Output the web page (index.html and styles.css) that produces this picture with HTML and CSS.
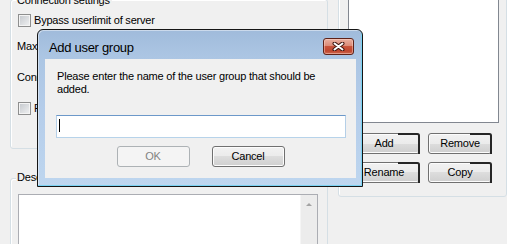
FILE: index.html
```html
<!DOCTYPE html>
<html lang="en">
<head>
    <meta charset="UTF-8">
    <title>Add user group</title>
    <link rel="stylesheet" href="styles.css">
</head>
<body>
    <div class="form">
        <div class="left">
            <div class="group conn">
                <div class="group-title">Connection settings</div>
                <div class="check-row first"><span class="checkbox"></span>Bypass userlimit of server</div>
                <div class="field-row">Maximum connection count:</div>
                <div class="field-row lower">Connection limit per IP:</div>
                <div class="check-row"><span class="checkbox"></span>Force SSL for user login</div>
            </div>
            <div class="group desc">
                <div class="group-title">Description</div>
                <div class="memo">
                    <div class="scrollbar"><span class="arrow-up"></span></div>
                </div>
            </div>
        </div>
        <div class="right">
            <div class="group groups">
                <div class="listbox"></div>
                <div class="btn-row">
                    <button class="btn side wide">Add</button>
                    <button class="btn side">Remove</button>
                </div>
                <div class="btn-row">
                    <button class="btn side wide">Rename</button>
                    <button class="btn side">Copy</button>
                </div>
            </div>
        </div>
    </div>

    <div class="dialog">
        <div class="titlebar">
            <span class="title">Add user group</span>
            <button class="close">
                <svg width="13" height="9" viewBox="0 0 13 9">
                    <path d="M2.5 1.5 10.5 7.5M10.5 1.5 2.5 7.5" stroke="#3f1610" stroke-width="4" stroke-linecap="round" fill="none"/>
                    <path d="M2.5 1.5 10.5 7.5M10.5 1.5 2.5 7.5" stroke="#fff" stroke-width="2" stroke-linecap="round" fill="none"/>
                </svg>
            </button>
        </div>
        <div class="client">
            <p class="prompt">Please enter the name of the user group that should be added.</p>
            <div class="textbox"><span class="caret"></span></div>
            <div class="actions">
                <button class="btn" disabled>OK</button>
                <button class="btn">Cancel</button>
            </div>
        </div>
    </div>
</body>
</html>
```

FILE: styles.css
```css
*{
    box-sizing: border-box;
}
body{
    margin: 0;
    width: 507px;
    height: 244px;
    overflow: hidden;
    position: relative;
    background: #f0f0f0;
    font-family: "Liberation Sans", Arial, sans-serif;
    font-size: 11px;
    line-height: 13px;
    letter-spacing: -0.2px;
    color: #000;
}
.form{
    display: flex;
    align-items: flex-start;
}
.left{
    width: 320px;
    margin: -1px 0 0 10px;
}
.right{
    width: 170px;
    margin: -18px 0 0 10px;
}
.group{
    border: 1px solid #d5dfe5;
    border-radius: 3px;
    box-shadow: inset 1px 1px 0 #fff;
}
.group-title{
    width: fit-content;
    margin: -6px 0 0 5px;
    padding: 0 2px 0 1px;
    background: #f0f0f0;
    white-space: nowrap;
}
.conn{
    padding-bottom: 33px;
}
.check-row{
    display: flex;
    align-items: center;
    gap: 3px;
    height: 13px;
    margin: 18px 0 0 7px;
    white-space: nowrap;
}
.check-row.first{
    margin-top: 7px;
}
.checkbox{
    width: 13px;
    height: 13px;
    flex: none;
    border: 1px solid #8e8f8f;
    background: linear-gradient(135deg, #c3c7cc, #f1f2f3);
    box-shadow: inset 0 0 0 1px #f4f4f4;
}
.field-row{
    height: 13px;
    margin: 13px 0 0 6px;
    white-space: nowrap;
}
.field-row.lower{
    margin-top: 18px;
}
.desc{
    margin-top: 29px;
    height: 100px;
}
.desc .group-title{
    margin-top: -8px;
}
.memo{
    margin: 10px 0 0 7px;
    width: 300px;
    height: 80px;
    border: 1px solid #abadb3;
    background: #fff;
    display: flex;
    justify-content: flex-end;
}
.scrollbar{
    width: 17px;
    background: #ececec;
    border-left: 1px solid #f5f5f5;
}
.arrow-up{
    display: block;
    width: 0;
    margin: 8px auto 0;
    border-left: 3px solid transparent;
    border-right: 3px solid transparent;
    border-bottom: 3px solid #a3a3a3;
}
.groups{
    padding: 0 0 13px 9px;
}
.listbox{
    width: 151px;
    height: 140px;
    border: 1px solid #828790;
    background: #fff;
}
.btn-row{
    display: flex;
    gap: 8px;
    margin-top: 10px;
}
.btn-row + .btn-row{
    margin-top: 8px;
}
.btn{
    font: inherit;
    letter-spacing: inherit;
    color: #000;
    padding: 0;
    width: 73px;
    height: 21px;
    border: 1px solid #707070;
    border-radius: 3px;
    background: linear-gradient(#f2f2f2, #ebebeb 50%, #dddddd 50%, #cfcfcf);
    box-shadow: inset 0 0 0 1px #fcfcfc;
}
.btn:disabled{
    border-color: #adb2b5;
    background: #f4f4f4;
    color: #838383;
    box-shadow: none;
}
.btn.side{
    position: relative;
    width: 64px;
}
.btn.side.wide{
    width: 72px;
}
/* stray dark edge on the top right of these buttons */
.btn.side::after{
    content: '';
    position: absolute;
    top: -1px;
    right: -1px;
    width: 20px;
    height: 19px;
    border-top: 2px solid #262626;
    border-right: 2px solid #262626;
    border-top-right-radius: 3px;
}

.dialog{
    position: absolute;
    left: 37px;
    top: 29px;
    width: 326px;
    height: 158px;
    display: flex;
    flex-direction: column;
    padding: 0 6px 8px 7px;
    border: 1px solid #151515;
    border-radius: 6px 6px 0 0;
    background: linear-gradient(#a0bbdb, #abc5e3 25px, #b5cdea 80px, #bed6ef);
    box-shadow: inset -1px -1px 0 #7bd3f3, inset 1px 1px 0 rgba(255,255,255,0.45);
}
.titlebar{
    height: 29px;
    flex: none;
    display: flex;
    align-items: flex-start;
    padding-left: 4px;
}
.title{
    padding-top: 10px;
    font-size: 13px;
    line-height: 15px;
    letter-spacing: -0.3px;
}
.close{
    margin: 8px 2px 0 auto;
    width: 31px;
    height: 17px;
    padding: 0;
    display: flex;
    align-items: center;
    justify-content: center;
    border: 1px solid #5e2218;
    border-radius: 3px;
    background: linear-gradient(#eab0a0, #dc8b77 45%, #c9533b 50%, #bf472f 80%, #d06a51);
    box-shadow: inset 0 0 0 1px rgba(255,220,210,0.45);
}
.client{
    flex: 1;
    background: #f0f0f0;
}
.prompt{
    margin: 11px 0 0 12px;
    max-width: 280px;
}
.textbox{
    margin: 19px 0 0 11px;
    width: 290px;
    height: 23px;
    padding: 3px 0 0 2px;
    background: #fff;
    border: 1px solid;
    border-color: #6c98c9 #b5cfe7 #b7d3ea #b5cfe7;
}
.caret{
    display: block;
    width: 1px;
    height: 13px;
    background: #000;
}
.actions{
    display: flex;
    justify-content: center;
    gap: 22px;
    margin-top: 8px;
}
```
